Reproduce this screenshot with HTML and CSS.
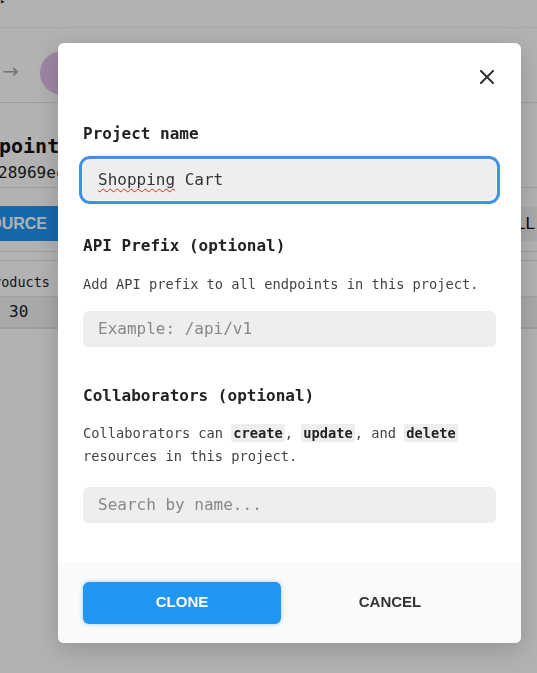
FILE: index.html
```html
<!DOCTYPE html>
<html>
<head>
<meta charset="utf-8">
<link rel="stylesheet" href="styles.css">
</head>
<body>
<div class="page">
  <div class="topbar"><span class="tiny">▸</span></div>
  <div class="nav">
    <span class="arrow">→</span>
    <span class="avatar"></span>
  </div>
  <div class="titleblock">
    <div class="title">point</div>
    <div class="hash">28969ec1a7f</div>
  </div>
  <div class="actions">
    <span class="btn-blue">SOURCE</span>
    <span class="btn-gray">ALL</span>
  </div>
  <div class="sep"></div>
  <div class="table">
    <div class="thead">roducts</div>
    <div class="trow">30</div>
  </div>
</div>

<div class="overlay"></div>

<div class="modal">
  <div class="modal-head">
    <button class="close" aria-label="Close">
      <svg width="14" height="14" viewBox="0 0 14 14"><path d="M1 1 L13 13 M13 1 L1 13" stroke="#333" stroke-width="2" stroke-linecap="square"/></svg>
    </button>
  </div>
  <div class="modal-body">
    <label class="label l1">Project name</label>
    <div class="field focused"><span class="misspelt">Shopping</span> Cart</div>

    <label class="label l2">API Prefix (optional)</label>
    <p class="desc d2">Add API prefix to all endpoints in this project.</p>
    <div class="field placeholder f2">Example: /api/v1</div>

    <label class="label l3">Collaborators (optional)</label>
    <p class="desc d3">Collaborators can <code>create</code>, <code>update</code>, and <code>delete</code> resources in this project.</p>
    <div class="field placeholder f3">Search by name...</div>
  </div>
  <div class="modal-foot">
    <button class="btn clone">CLONE</button>
    <button class="btn cancel">CANCEL</button>
  </div>
</div>
</body>
</html>
```

FILE: styles.css
```css
* { box-sizing: border-box; }
html, body {
  margin: 0;
  padding: 0;
  width: 537px;
  height: 673px;
  overflow: hidden;
  background: #fff;
  font-family: "DejaVu Sans Mono", "Liberation Mono", monospace;
}

/* background page */
.page { width: 537px; height: 673px; background: #fff; }
.topbar {
  height: 30px;
  border-bottom: 1px solid #f2f2f2;
}
.tiny { font-size: 9px; color: #222; line-height: 6px; display: block; margin-top: -2px; }
.nav {
  height: 75px;
  display: flex;
  align-items: center;
  padding-top: 16px;
  border-bottom: 1px solid #e4e4e4;
}
.arrow { color: #aaa; font-size: 20px; font-family: "DejaVu Sans", sans-serif; margin-top: -4px; margin-left: 2px; }
.avatar {
  width: 44px; height: 44px; border-radius: 50%;
  background: #e2c0ec;
  margin-left: 21px;
}
.titleblock {
  padding-top: 31px;
  height: 85px;
  border-bottom: 1px solid #e4e4e4;
}
.title { font-weight: bold; font-size: 20px; line-height: 24px; color: #111; margin-left: -1px; }
.hash { font-size: 16px; line-height: 22px; color: #222; margin-top: 4px; margin-left: -2px; }
.actions {
  display: flex;
  justify-content: space-between;
  align-items: center;
  padding-top: 8px;
  height: 64px;
  border-bottom: 1px solid #e0e0e0;
}
.btn-blue {
  background: #2196f3;
  color: #fff;
  font-family: "Liberation Sans", Arial, sans-serif;
  font-weight: bold;
  font-size: 16px;
  height: 35px;
  line-height: 35px;
  padding: 0 30px 0 0;
  margin-left: -3px;
  border-radius: 3px;
  width: 80px;
  white-space: nowrap;
  text-align: right;
  direction: rtl;
}
.btn-gray {
  background: #f4f4f4;
  color: #111;
  font-family: "Liberation Sans", Arial, sans-serif;
  font-size: 17px;
  height: 34px;
  line-height: 34px;
  padding: 0 4px 0 20px;
  margin-right: -2px;
}
.sep { height: 9px; border-bottom: 1px solid #e0e0e0; }
.thead {
  height: 36px; line-height: 42px; font-size: 13.5px; color: #222;
  margin-left: -7px;
  border-bottom: 1px solid #e8e8e8;
}
.trow {
  height: 32px; line-height: 30px; font-size: 16px; color: #222;
  padding-left: 9px;
  background: #f3f3f3;
  border-bottom: 2px solid #e2e2e2;
}

.overlay {
  position: fixed; inset: 0;
  background: rgba(0,0,0,0.3);
}

/* modal */
.modal {
  position: absolute;
  left: 58px; top: 43px;
  width: 463px; height: 600px;
  background: #fff;
  border-radius: 6px;
  box-shadow: 0 6px 24px rgba(0,0,0,0.18);
  display: flex;
  flex-direction: column;
  overflow: hidden;
}
.modal-head {
  height: 80px;
  display: flex;
  justify-content: flex-end;
  align-items: flex-start;
  padding: 27px 27px 0 0;
}
.close {
  border: 0; background: transparent; padding: 0; margin: 0;
  width: 14px; height: 14px; display: block; cursor: pointer;
}
.close svg { display: block; }
.modal-body {
  flex: 1;
  padding: 0 25px;
  display: flex;
  flex-direction: column;
}
.label {
  display: block;
  font-weight: bold;
  font-size: 16px;
  line-height: 20px;
  color: #222;
  margin-top: 1px;
}
.l2 { margin-top: 36px; }
.l3 { margin-top: 39px; }
.desc {
  margin: 0;
  font-size: 13.7px;
  color: #444;
}
.d2 { margin-top: 18px; line-height: 20px; }
.d3 { margin-top: 16px; line-height: 23px; }
.desc code {
  font-family: inherit;
  font-weight: bold;
  background: #eeeeee;
  color: #222;
  padding: 1px 2px;
  border-radius: 2px;
}
.field {
  height: 36px;
  background: #eeeeee;
  border-radius: 6px;
  padding: 0 15px;
  font-size: 16px;
  line-height: 36px;
  color: #333;
}
.focused {
  margin-top: 16px;
  height: 40px;
  line-height: 40px;
  box-shadow: 0 0 0 1px #f6f6f6, 0 0 0 4px #3f92de;
  border-radius: 7px;
}
.misspelt {
  text-decoration: underline wavy #e02020 1px;
  text-underline-offset: 3px;
}
.placeholder { color: #888; }
.f2 { margin-top: 17px; }
.f3 { margin-top: 19px; }

.modal-foot {
  height: 81px;
  background: #fafafa;
  display: flex;
  align-items: flex-start;
  padding: 20px 25px 0;
  gap: 10px;
}
.btn {
  width: 198px;
  height: 42px;
  border: 0;
  border-radius: 6px;
  font-family: "Liberation Sans", Arial, sans-serif;
  font-weight: bold;
  font-size: 15px;
  padding: 0 0 3px;
  cursor: pointer;
}
.clone {
  background: #2196f3;
  color: #fff;
  box-shadow: 0 0 4px rgba(33,150,243,0.45);
}
.cancel {
  background: transparent;
  color: #333;
}
```
